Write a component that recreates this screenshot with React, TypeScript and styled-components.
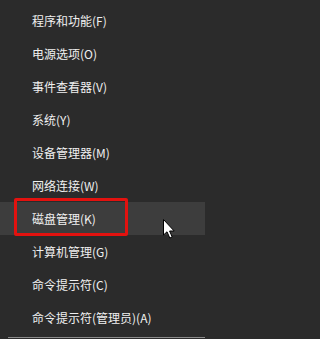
import React from 'react';
import styled, { createGlobalStyle } from 'styled-components';

const GlobalStyle = createGlobalStyle`
    html, body {
        margin: 0;
        padding: 0;
        background: #2b2b2b;
    }
`;

const MenuWrap = styled.div`
    width: 205px;
    height: 339px;
    box-sizing: border-box;
    padding-top: 4px;
    background: #2b2b2b;
    font-family: "Microsoft YaHei", "Noto Sans CJK SC", sans-serif;
    overflow: hidden;
`;

const Item = styled.div<{ active?: boolean }>`
    position: relative;
    height: 33px;
    display: flex;
    align-items: center;
    padding-left: 32px;
    font-size: 12px;
    color: #f0f0f0;
    background: ${(props) => (props.active ? '#3d3d3d' : 'transparent')};
`;

const Mark = styled.div`
    position: absolute;
    left: 14px;
    top: -4px;
    width: 114px;
    height: 38px;
    box-sizing: border-box;
    border: 3px solid #e3120f;
    border-radius: 2px;
`;

const Cursor = styled.svg`
    position: absolute;
    left: 162px;
    top: 16px;
`;

const Separator = styled.div`
    margin: 3px 0 0 8px;
    height: 1px;
    background: #8c8c8c;
`;

const items = [
    '程序和功能(F)',
    '电源选项(O)',
    '事件查看器(V)',
    '系统(Y)',
    '设备管理器(M)',
    '网络连接(W)',
    '磁盘管理(K)',
    '计算机管理(G)',
    '命令提示符(C)',
    '命令提示符(管理员)(A)',
];

const App: React.FC = () => {
    return (
        <>
            <GlobalStyle />
            <MenuWrap>
                {items.map((label, i) => (
                    <Item key={label} active={i === 6}>
                        {label}
                        {i === 6 && (
                            <>
                                <Mark />
                                <Cursor width="14" height="22" viewBox="0 0 14 22">
                                    <path
                                        d="M1.5 1.5 L1.5 17 L5 13.8 L7.8 20 L10.2 19 L7.6 13 L12.2 13 Z"
                                        fill="#ffffff"
                                        stroke="#000000"
                                        strokeWidth="1"
                                        strokeLinejoin="miter"
                                    />
                                </Cursor>
                            </>
                        )}
                    </Item>
                ))}
                <Separator />
            </MenuWrap>
        </>
    );
};

export default App;
